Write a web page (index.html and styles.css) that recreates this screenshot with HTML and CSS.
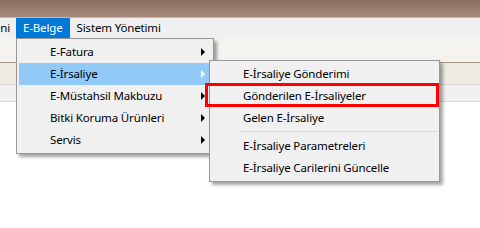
FILE: index.html
```html
<!DOCTYPE html>
<html lang="tr">
<head>
<meta charset="utf-8">
<link rel="stylesheet" href="styles.css">
</head>
<body>
<div class="window">
  <div class="titlebar"></div>
  <nav class="menubar">
    <span class="mi cut">ni</span>
    <div class="mi active">E-Belge
      <ul class="menu dropdown">
        <li class="item has-sub">E-Fatura</li>
        <li class="item has-sub hot">E-İrsaliye
          <ul class="menu submenu">
            <li class="item">E-İrsaliye Gönderimi</li>
            <li class="item marked">Gönderilen E-İrsaliyeler<span class="redbox"></span></li>
            <li class="item">Gelen E-İrsaliye</li>
            <li class="sep"></li>
            <li class="item">E-İrsaliye Parametreleri</li>
            <li class="item">E-İrsaliye Carilerini Güncelle</li>
          </ul>
        </li>
        <li class="item has-sub">E-Müstahsil Makbuzu</li>
        <li class="item has-sub">Bitki Koruma Ürünleri</li>
        <li class="item has-sub">Servis</li>
      </ul>
    </div>
    <span class="mi">Sistem Yönetimi</span>
  </nav>
  <div class="toolbar"></div>
  <div class="band"></div>
  <div class="band2"></div>
  <div class="content"></div>
</div>
</body>
</html>
```
FILE: styles.css
```css
* { box-sizing: border-box; }
html, body { margin: 0; padding: 0; }
body {
  width: 480px;
  height: 228px;
  overflow: hidden;
  background: #ffffff;
  font-family: "Noto Sans", "Open Sans", sans-serif;
  font-size: 11.5px;
  letter-spacing: -0.15px;
  color: #000;
}
.window { display: flex; flex-direction: column; }
.titlebar {
  height: 18px;
  background: linear-gradient(#8d6f60, #a98b7b);
  border-bottom: 1px solid #c9b6ab;
}
.menubar {
  height: 20px;
  background: #f0f0f0;
  display: flex;
  align-items: stretch;
  position: relative;
  z-index: 2;
}
.mi {
  display: flex;
  align-items: center;
  padding: 0 7px;
  line-height: 20px;
  white-space: nowrap;
}
.mi.cut {
  width: 16px;
  padding: 0 6px 0 0;
  justify-content: flex-end;
}
.mi.active {
  position: relative;
  background: #0078d7;
  color: #fff;
}
.toolbar {
  height: 25px;
  background: #f4f3ef;
  border-bottom: 1px solid #a8968a;
}
.band {
  height: 22px;
  background: #eeebe4;
  border-bottom: 1px solid #d8d4cc;
}
.band2 {
  height: 17px;
  background: #f0f0f0;
  border-bottom: 1px solid #dadada;
}
.content { flex: 1; background: #fff; }

.menu {
  list-style: none;
  margin: 0;
  padding: 2px;
  background: #f0f0f0;
  border: 1px solid #979797;
  box-shadow: 3px 3px 3px rgba(0, 0, 0, 0.35);
  color: #000;
  position: absolute;
}
.dropdown { left: 0; top: 20px; width: 198px; }
.submenu { left: 190px; top: -3px; width: 231px; }
.item {
  position: relative;
  height: 22px;
  line-height: 22px;
  padding-left: 31px;
  white-space: nowrap;
}
.item.hot { background: #91c9f7; }
.has-sub::after {
  content: "";
  position: absolute;
  right: 6px;
  top: 7px;
  width: 0;
  height: 0;
  border-left: 4px solid #000;
  border-top: 4px solid transparent;
  border-bottom: 4px solid transparent;
}
.has-sub.hot::after { border-left-color: #fff; }
.sep {
  height: 6px;
  margin-left: 28px;
  padding-top: 2px;
}
.sep::before {
  content: "";
  display: block;
  height: 1px;
  background: #d7d7d7;
}
.redbox {
  position: absolute;
  left: -7px;
  top: -2px;
  width: 234px;
  height: 24px;
  border: 3px solid #ff0000;
}
```
